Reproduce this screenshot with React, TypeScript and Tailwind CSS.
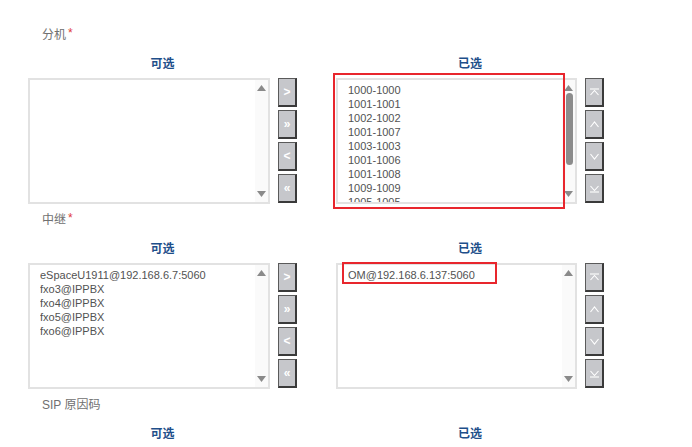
import React from "react";

const FONT = { fontFamily: '"Liberation Sans", Arial, "Noto Sans CJK SC", sans-serif' };

function TriUp() {
  return (
    <svg width="9" height="6" viewBox="0 0 9 6"><polygon points="4.5,0 9,6 0,6" fill="#8a8a8a" /></svg>
  );
}
function TriDown() {
  return (
    <svg width="9" height="6" viewBox="0 0 9 6"><polygon points="0,0 9,0 4.5,6" fill="#8a8a8a" /></svg>
  );
}

function Btn({ children }: { children: React.ReactNode }) {
  return (
    <div className="w-[19px] h-[29px] bg-[#c6c7cb] border border-[#5a5a5a] border-r-2 border-b-2 border-r-[#3a3a3a] border-b-[#3a3a3a] flex items-center justify-center text-white font-bold text-[12px] leading-none">
      {children}
    </div>
  );
}

function Icon({ kind }: { kind: "top" | "up" | "down" | "bottom" }) {
  return (
    <svg width="11" height="11" viewBox="0 0 11 11" fill="none" stroke="#ffffff" strokeWidth="1.1">
      {kind === "top" && (<><line x1="1" y1="2" x2="10" y2="2" /><polyline points="1.5,8 5.5,3.5 9.5,8" /></>)}
      {kind === "up" && <polyline points="1.5,8 5.5,3 9.5,8" />}
      {kind === "down" && <polyline points="1.5,3 5.5,8 9.5,3" />}
      {kind === "bottom" && (<><polyline points="1.5,3 5.5,7.5 9.5,3" /><line x1="1" y1="9" x2="10" y2="9" /></>)}
    </svg>
  );
}

function ListBox({ items, thumb, overlay, wide }: { items: string[]; thumb?: boolean; overlay?: React.ReactNode; wide: number }) {
  return (
    <div className="relative h-[126px] border-2 border-[#e2e2e2] bg-white" style={{ width: wide }}>
      <div className="absolute left-[10px] top-0 right-[14px] bottom-0 overflow-hidden pt-[3px] text-[11px] leading-[14px] text-[#525252]">
        {items.map((t) => (
          <div key={t} className="whitespace-nowrap">{t}</div>
        ))}
      </div>
      <div className="absolute right-0 top-0 bottom-0 w-[13px] flex flex-col items-center justify-between py-[5px] bg-[#fafafa]">
        <TriUp />
        {thumb && <div className="w-[7px] h-[72px] rounded-full bg-[#8c8c8c] mb-auto ml-[1px]" style={{ marginTop: 2 }} />}
        <TriDown />
      </div>
      {overlay}
    </div>
  );
}

function Group({
  header,
  items,
  right,
  thumb,
  overlay,
  wide,
  noBox,
}: {
  header: string;
  items: string[];
  right?: boolean;
  thumb?: boolean;
  overlay?: React.ReactNode;
  wide: number;
  noBox?: boolean;
}) {
  return (
    <div className="flex flex-col" style={{ width: wide + 27 }}>
      <div className="h-[16px] leading-[16px] text-center text-[12px] font-bold text-[#1e4f8a]">{header}</div>
      {!noBox && (
        <div className="flex gap-[8px] mt-[6px]">
          <ListBox items={items} thumb={thumb} overlay={overlay} wide={wide} />
          <div className="flex flex-col gap-[3px]">
            {right ? (
              <>
                <Btn><Icon kind="top" /></Btn>
                <Btn><Icon kind="up" /></Btn>
                <Btn><Icon kind="down" /></Btn>
                <Btn><Icon kind="bottom" /></Btn>
              </>
            ) : (
              <>
                <Btn>&gt;</Btn>
                <Btn>»</Btn>
                <Btn>&lt;</Btn>
                <Btn>«</Btn>
              </>
            )}
          </div>
        </div>
      )}
    </div>
  );
}

function Section({
  label,
  star,
  left,
  right,
  thumb,
  overlay,
  noBox,
}: {
  label: string;
  star?: boolean;
  left: string[];
  right: string[];
  thumb?: boolean;
  overlay?: React.ReactNode;
  noBox?: boolean;
}) {
  return (
    <div className="flex flex-col">
      <div className="pl-[14px] h-[16px] leading-[16px] text-[12px] text-[#707070]">
        {label}
        {star && <span className="text-[#e03a3a] ml-[2px] relative -top-[2px]">*</span>}
      </div>
      <div className="flex gap-[39px] mt-[13px]">
        <Group header="可选" items={left} wide={242} noBox={noBox} />
        <Group header="已选" items={right} right thumb={thumb} overlay={overlay} wide={241} noBox={noBox} />
      </div>
    </div>
  );
}

export default function App() {
  return (
    <div className="w-[692px] h-[447px] overflow-hidden bg-white" style={FONT}>
      <div className="pl-[28px] pt-[27px] flex flex-col gap-[8px]">
        <Section
          label="分机"
          star
          left={[]}
          right={["1000-1000", "1001-1001", "1002-1002", "1001-1007", "1003-1003", "1001-1006", "1001-1008", "1009-1009", "1005-1005", "1006-1006"]}
          thumb
          overlay={<div className="absolute left-[-5px] top-[-7px] w-[232px] h-[136px] border-2 border-[#e8262d]" />}
        />
        <Section
          label="中继"
          star
          left={["eSpaceU1911@192.168.6.7:5060", "fxo3@IPPBX", "fxo4@IPPBX", "fxo5@IPPBX", "fxo6@IPPBX"]}
          right={["OM@192.168.6.137:5060"]}
          overlay={<div className="absolute left-[4px] top-[-3px] w-[155px] h-[22px] border-2 border-[#e8262d]" />}
        />
        <Section label="SIP 原因码" left={[]} right={[]} noBox />
      </div>
    </div>
  );
}
